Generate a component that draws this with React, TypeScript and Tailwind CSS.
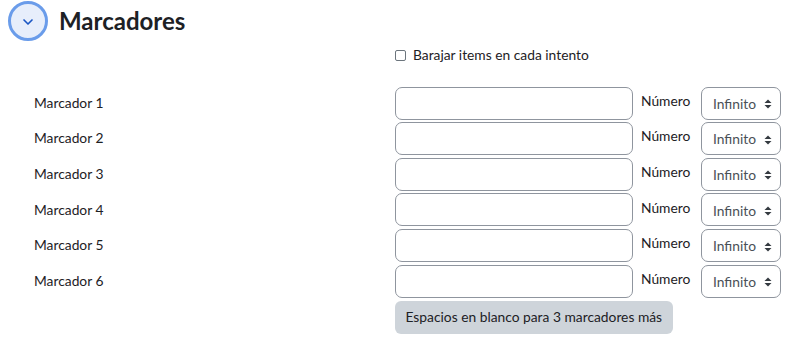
import { ChevronDown } from "lucide-react";

const ROWS = [1, 2, 3, 4, 5, 6];

function Arrows() {
  return (
    <svg width="8" height="10" viewBox="0 0 8 10" className="ml-auto shrink-0" aria-hidden>
      <path d="M4 0.5 L7.5 4 H0.5 Z" fill="#343a40" />
      <path d="M4 9.5 L7.5 6 H0.5 Z" fill="#343a40" />
    </svg>
  );
}

function MarkerRow({ n }: { n: number }) {
  return (
    <div className="flex h-[33px] items-center">
      <div className="w-[395px] pl-[34px] text-[13.8px] text-[#1d2125]">Marcador {n}</div>
      <input
        type="text"
        className="h-[33px] w-[238px] rounded-[7px] border border-[#8f959e] bg-white px-3 outline-none"
      />
      <span className="ml-[8px] w-[60px] -translate-y-[2px] text-[13.8px] text-[#1d2125]">Número</span>
      <div className="flex h-[33px] w-[80px] items-center rounded-[7px] border border-[#8f959e] bg-white pl-[11px] pr-[8px] pt-[2px] text-[13.8px] text-[#495057]">
        <span>Infinito</span>
        <Arrows />
      </div>
    </div>
  );
}

export default function App() {
  return (
    <div className="h-[341px] w-[791px] overflow-hidden bg-white font-['Lato',sans-serif]">
      <div className="flex items-center pl-[8px] pt-[1px]">
        <div className="flex h-[40px] w-[40px] items-center justify-center rounded-full border-[3px] border-[#6a9cea] bg-[#e7eefb]">
          <ChevronDown size={16} strokeWidth={2.5} className="mt-[1px] text-[#1a56c4]" />
        </div>
        <h2 className="ml-[11px] text-[24px] font-bold leading-none text-[#1d2125]">Marcadores</h2>
      </div>

      <label className="ml-[395px] mt-[4px] flex items-center gap-[7px] text-[13.8px] text-[#1d2125]">
        <span className="h-[11px] w-[11px] rounded-[2px] border border-[#6c757d] bg-white" />
        Barajar items en cada intento
      </label>

      <div className="mt-[21px] flex flex-col gap-[2.6px]">
        {ROWS.map((n) => (
          <MarkerRow key={n} n={n} />
        ))}
      </div>

      <button
        type="button"
        className="ml-[395px] mt-[3px] h-[33px] rounded-[6px] bg-[#ced4da] px-[10.5px] text-[13.8px] text-[#1d2125]"
      >
        Espacios en blanco para 3 marcadores más
      </button>
    </div>
  );
}
